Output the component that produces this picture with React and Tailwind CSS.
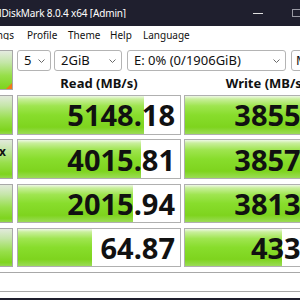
import React from "react";

const rows = [
  { read: "5148.18", rv: 5148.18, write: "3855.62", wv: 3855.62, frag: "" },
  { read: "4015.81", rv: 4015.81, write: "3857.30", wv: 3857.3, frag: "x" },
  { read: "2015.94", rv: 2015.94, write: "3813.45", wv: 3813.45, frag: "" },
  { read: "64.87", rv: 64.87, write: "433.27", wv: 433.27, frag: "" },
];

const barWidth = (v) => Math.round(25.3 + 27.4 * Math.log10(v));

const GREEN =
  "bg-[linear-gradient(to_bottom,#eef8e6_0%,#c9ef9c_8%,#9fe550_26%,#88dd2c_50%,#7ed41e_82%,#9bdc56_100%)]";

function Chevron() {
  return (
    <svg width="7" height="4" viewBox="0 0 7 4" className="shrink-0">
      <polyline points="0.5,0.5 3.5,3.5 6.5,0.5" fill="none" stroke="#6a6a6a" strokeWidth="1" />
    </svg>
  );
}

function Select({ text, className }) {
  return (
    <div
      className={`h-[21px] shrink-0 flex items-center justify-between pl-[6px] pr-[5px] border border-[#b4b4b4] rounded-[3px] bg-white ${className}`}
    >
      <span className="text-[13px] leading-none whitespace-nowrap text-[#111]">{text}</span>
      <Chevron />
    </div>
  );
}

function Cell({ text, value }) {
  return (
    <div className="relative w-[164px] h-full shrink-0 border border-[#b0b0b0] bg-white">
      <div
        className={`absolute left-0 top-0 bottom-0 ${GREEN}`}
        style={{ width: barWidth(value) - 1 }}
      />
      <div className="relative h-full flex items-center justify-end pr-[5px]">
        <span className="text-[29px] font-bold leading-none text-[#111]">{text}</span>
      </div>
    </div>
  );
}

export default function App() {
  return (
    <div className="w-[300px] h-[300px] overflow-hidden bg-white flex flex-col font-['Noto_Sans',sans-serif] text-black">
      {/* title bar */}
      <div className="h-[26px] shrink-0 bg-[#1f1f2e] flex items-center">
        <div className="w-[126px] shrink-0 flex justify-end overflow-hidden">
          <span className="whitespace-nowrap text-[10px] tracking-[-0.15px] leading-none text-white">
            CrystalDiskMark 8.0.4 x64 [Admin]
          </span>
        </div>
        <div className="ml-[127px] w-[10px] h-px bg-[#e0e0e0] shrink-0" />
        <div className="ml-[29px] w-[9px] h-[8px] border border-[#9a9aa4] shrink-0" />
      </div>

      {/* menu */}
      <div className="h-[18px] shrink-0 flex items-center text-[10px] leading-none text-[#111]">
        <div className="w-[14px] shrink-0 flex justify-end overflow-hidden">
          <span className="whitespace-nowrap">Settings</span>
        </div>
        <div className="ml-[13px] w-[41px] shrink-0 whitespace-nowrap">Profile</div>
        <div className="w-[42px] shrink-0 whitespace-nowrap">Theme</div>
        <div className="w-[33px] shrink-0 whitespace-nowrap">Help</div>
        <div className="shrink-0 whitespace-nowrap">Language</div>
      </div>

      {/* toolbar + headers */}
      <div className="mt-[6px] flex shrink-0">
        <div
          className={`relative w-[13px] h-[40px] shrink-0 border-y border-r border-[#a8a8a8] bg-[linear-gradient(to_bottom,#e4ebe0_0%,#c4e6a8_30%,#96df48_65%,#7dd41c_100%)]`}
        >
          <div className="absolute right-0 bottom-0 w-0 h-0 border-l-[6px] border-l-transparent border-b-[6px] border-b-[#f07a1a]" />
        </div>
        <div className="ml-[4px] flex flex-col shrink-0">
          <div className="flex h-[21px]">
            <Select text="5" className="w-[34px]" />
            <Select text="2GiB" className="ml-[3px] w-[68px]" />
            <Select text="E: 0% (0/1906GiB)" className="ml-[5px] w-[159px]" />
            <div className="ml-[5px] w-[50px] h-[21px] shrink-0 flex items-center pl-[4px] border border-[#b4b4b4] rounded-[3px]">
              <span className="text-[13px] leading-none whitespace-nowrap text-[#111]">MB/s</span>
            </div>
          </div>
          <div className="flex h-[24px]">
            <div className="w-[164px] shrink-0 flex items-center justify-center">
              <span className="text-[13px] font-bold leading-none whitespace-nowrap text-[#111]">Read (MB/s)</span>
            </div>
            <div className="ml-[3px] w-[164px] shrink-0 flex items-center justify-center">
              <span className="text-[13px] font-bold leading-none whitespace-nowrap text-[#111]">Write (MB/s)</span>
            </div>
          </div>
        </div>
      </div>

      {/* result rows */}
      <div className="flex flex-col gap-[4.75px] shrink-0">
        {rows.map((r, i) => (
          <div key={i} className="flex h-[39.5px] shrink-0">
            <div
              className={`w-[13px] h-full shrink-0 border-y border-r border-[#a8a8a8] bg-[linear-gradient(to_bottom,#e2eadc_0%,#c6e6aa_25%,#98df4c_60%,#7ed41e_90%,#92d84a_100%)] overflow-hidden flex items-start`}
            >
              {r.frag && (
                <span className="mt-[6px] ml-[-1px] text-[12px] font-bold leading-none text-[#111]">{r.frag}</span>
              )}
            </div>
            <div className="ml-[4px] h-full shrink-0">
              <Cell text={r.read} value={r.rv} />
            </div>
            <div className="ml-[3px] h-full shrink-0">
              <Cell text={r.write} value={r.wv} />
            </div>
          </div>
        ))}
      </div>

      {/* comment box */}
      <div className="mt-[4.75px] h-[20px] shrink-0 border-y border-[#a8a8a8] bg-white" />

      <div className="mt-auto h-[2px] shrink-0 bg-[#1f1f2e]" />
    </div>
  );
}
